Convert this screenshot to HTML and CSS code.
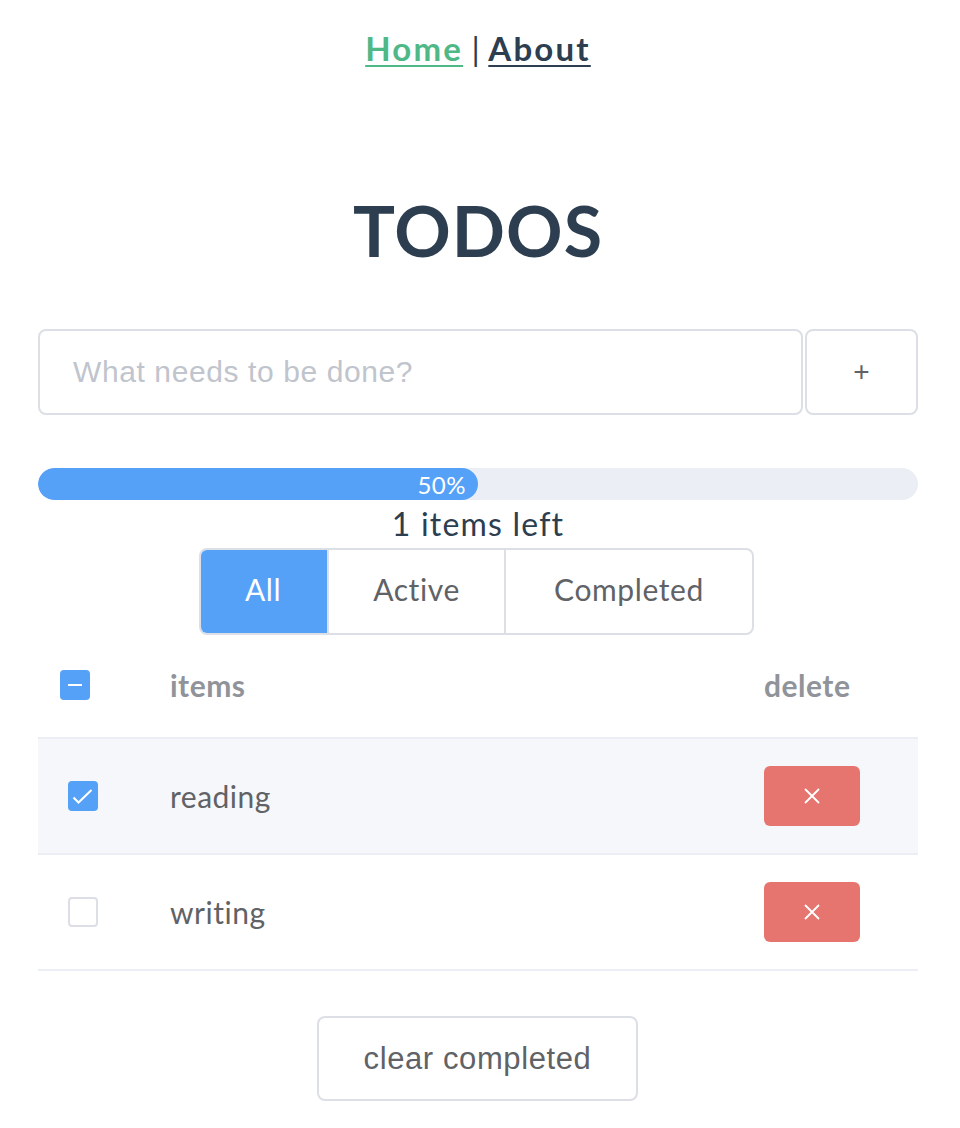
FILE: index.html
```html
<!DOCTYPE html>
<html>
<head>
<meta charset="utf-8">
<link rel="stylesheet" href="styles.css">
</head>
<body>
<div class="app">
  <nav class="nav">
    <a class="nav-link home" href="#">Home</a> | <a class="nav-link about" href="#">About</a>
  </nav>
  <h1 class="title">TODOS</h1>
  <div class="add-row">
    <div class="input-box"><span class="placeholder">What needs to be done?</span></div>
    <button class="add-btn">+</button>
  </div>
  <div class="progress">
    <div class="progress-fill" style="width:50%"><span class="progress-text">50%</span></div>
  </div>
  <div class="left">1 items left</div>
  <div class="filters">
    <div class="filter active">All</div>
    <div class="filter">Active</div>
    <div class="filter">Completed</div>
  </div>
  <div class="table">
    <div class="row head">
      <div class="cell-check"><span class="cb cb-indeterminate"><span class="dash"></span></span></div>
      <div class="cell-name">items</div>
      <div class="cell-del">delete</div>
    </div>
    <div class="row body hover">
      <div class="cell-check inner"><span class="cb cb-checked">
        <svg width="30" height="30" viewBox="0 0 30 30"><path d="M5.5 16.5 L10.5 21.5 L23.5 9" fill="none" stroke="#fff" stroke-width="2"/></svg>
      </span></div>
      <div class="cell-name">reading</div>
      <div class="cell-del"><button class="del-btn"><svg width="18" height="18" viewBox="0 0 18 18"><path d="M2 2 L16 16 M16 2 L2 16" stroke="#fff" stroke-width="1.8"/></svg></button></div>
    </div>
    <div class="row body">
      <div class="cell-check inner"><span class="cb"></span></div>
      <div class="cell-name">writing</div>
      <div class="cell-del"><button class="del-btn"><svg width="18" height="18" viewBox="0 0 18 18"><path d="M2 2 L16 16 M16 2 L2 16" stroke="#fff" stroke-width="1.8"/></svg></button></div>
    </div>
  </div>
  <div class="clear-wrap"><button class="clear-btn">clear completed</button></div>
</div>
</body>
</html>
```

FILE: styles.css
```css
* { box-sizing: border-box; }
body {
  margin: 0;
  background: #fff;
  font-family: Lato, "Noto Sans", sans-serif;
  color: #2c3e50;
}
.app {
  width: 880px;
  margin-left: 38px;
  display: flex;
  flex-direction: column;
}
.nav {
  padding-top: 28px;
  height: 72px;
  line-height: 40px;
  text-align: center;
  font-size: 33px;
  color: #2c3e50;
}
.nav-link {
  font-weight: 700;
  letter-spacing: 2.2px;
  text-decoration: underline;
  text-decoration-thickness: 2px;
  text-underline-offset: 4px;
}
.home { color: #4fb887; }
.about { color: #2c3e50; }
.title {
  margin: 118px 0 0;
  height: 80px;
  line-height: 80px;
  text-align: center;
  font-size: 70px;
  font-weight: 700;
  letter-spacing: 1px;
}
.add-row {
  margin-top: 59px;
  display: flex;
  height: 86px;
  gap: 2px;
}
.input-box {
  flex: 1;
  border: 2px solid #dcdfe6;
  border-radius: 8px;
  display: flex;
  align-items: center;
  padding-left: 33px;
}
.placeholder {
  font-family: "Liberation Sans", Arial, sans-serif;
  font-size: 30px;
  letter-spacing: 0.6px;
  color: #c0c4cc;
}
.add-btn {
  width: 113px;
  border: 2px solid #dcdfe6;
  border-radius: 8px;
  background: #fff;
  font-family: "Liberation Sans", Arial, sans-serif;
  font-size: 28px;
  color: #606266;
  padding: 0;
}
.progress {
  margin-top: 53px;
  height: 32px;
  border-radius: 16px;
  background: #ebeef5;
  overflow: hidden;
}
.progress-fill {
  height: 100%;
  background: #56a1f8;
  border-radius: 16px;
  text-align: right;
  padding-right: 12px;
  line-height: 34px;
}
.progress-text {
  color: #fff;
  font-size: 24px;
  letter-spacing: 0.5px;
}
.left {
  height: 48px;
  line-height: 48px;
  text-align: center;
  font-size: 32px;
  letter-spacing: 1.2px;
  color: #2c3e50;
}
.filters {
  align-self: center;
  display: flex;
  height: 87px;
  margin-left: -3px;
  border: 2px solid #dcdfe6;
  border-radius: 8px;
  overflow: hidden;
}
.filter {
  display: flex;
  align-items: center;
  justify-content: center;
  padding-bottom: 6px;
  font-size: 30px;
  letter-spacing: 0.6px;
  color: #606266;
  border-left: 2px solid #dcdfe6;
}
.filter:nth-child(1) { width: 126px; border-left: none; }
.filter:nth-child(2) { width: 177px; }
.filter:nth-child(3) { width: 248px; }
.filter.active { background: #56a1f8; color: #fff; margin: -2px 0 -2px -2px; width: 128px; }
.table {
  margin-top: 15px;
  display: flex;
  flex-direction: column;
}
.row {
  display: flex;
  align-items: center;
  border-bottom: 2px solid #ebeef5;
  font-size: 30px;
  letter-spacing: 0.5px;
}
.row.head { height: 89px; padding-bottom: 18px; color: #909399; font-weight: 700; }
.row.body { height: 116px; color: #606266; }
.row.hover { background: #f5f7fa; }
.cell-check { width: 132px; padding-left: 22px; display: flex; }
.cell-check.inner { padding-left: 30px; }
.cell-name { flex: 1; }
.cell-del { width: 154px; }
.cb {
  width: 30px;
  height: 30px;
  border: 2px solid #dcdfe6;
  border-radius: 4px;
  background: #fff;
  display: flex;
  align-items: center;
  justify-content: center;
}
.cb-indeterminate, .cb-checked { background: #56a1f8; border-color: #56a1f8; }
.cb-checked svg { flex: none; margin: -2px; }
.dash { width: 14px; height: 2px; background: #fff; }
.del-btn {
  width: 96px;
  height: 60px;
  border: none;
  border-radius: 6px;
  background: #e6756f;
  display: flex;
  align-items: center;
  justify-content: center;
  padding: 0;
}
.clear-wrap {
  display: flex;
  justify-content: center;
  margin-top: 45px;
}
.clear-btn {
  width: 321px;
  height: 85px;
  border: 2px solid #dcdfe6;
  border-radius: 8px;
  background: #fff;
  font-family: "Liberation Sans", Arial, sans-serif;
  font-size: 31px;
  letter-spacing: 0.6px;
  color: #606266;
  margin-left: -1px;
  padding: 0;
}
```
